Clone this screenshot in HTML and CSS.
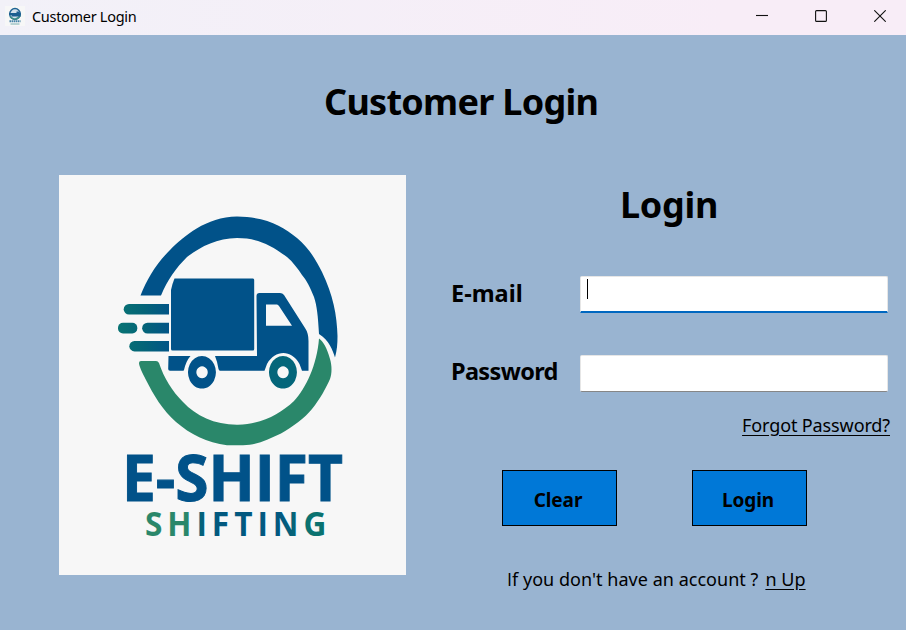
FILE: index.html
```html
<!DOCTYPE html>
<html lang="en">
<head>
<meta charset="utf-8">
<title>Customer Login</title>
<link rel="stylesheet" href="styles.css">
</head>
<body>
<header class="titlebar">
  <svg class="app-icon" width="20" height="20" viewBox="0 0 20 20">
    <rect width="20" height="20" fill="#f7f7f7"/>
    <ellipse cx="10" cy="8" rx="5.3" ry="5.4" fill="#d5e2ec" stroke="#1f6493" stroke-width="1.5"/>
    <path d="M5 10.500Q10 16.500 15.300 9.500" fill="none" stroke="#3f8f85" stroke-width="1.500"/>
    <path d="M4 7h7.500v-1.500h2l2 2v3H6.500V9H4z" fill="#1c5f90"/>
    <path d="M4.500 15.200h11" stroke="#4483a6" stroke-width="2" stroke-dasharray="1.600 .5"/>
    <path d="M5.500 18h9" stroke="#78aeb0" stroke-width="1"/>
  </svg>
  <span class="window-title">Customer Login</span>
  <div class="window-controls">
    <svg width="12" height="12" viewBox="0 0 12 12"><path d="M0 5.500h12"/></svg>
    <svg width="12" height="12" viewBox="0 0 12 12"><rect x=".6" y=".6" width="10.800" height="10.800" rx="1"/></svg>
    <svg width="12" height="12" viewBox="0 0 12 12"><path d="M.3 .3l11.400 11.400M11.700 .3L.3 11.700"/></svg>
  </div>
</header>
<main class="content">
  <h1 class="page-title"><span>Customer Login</span></h1>
  <div class="columns">
    <svg class="logo" width="347" height="400" viewBox="59 175 347 400">
      <defs>
        <linearGradient id="speed" gradientUnits="userSpaceOnUse" x1="118" y1="0" x2="170" y2="0"><stop offset="0" stop-color="#087373"/><stop offset=".5" stop-color="#046478"/><stop offset="1" stop-color="#025487"/></linearGradient>
        <linearGradient id="letters" x1="0" y1="0" x2="1" y2="0"><stop offset=".26" stop-color="#2a876a"/><stop offset=".28" stop-color="#056579"/><stop offset=".4" stop-color="#02597f"/><stop offset=".75" stop-color="#025880"/><stop offset=".9" stop-color="#0a7270"/></linearGradient>
      </defs>
      <g fill="#015289">
        <path d="M140.500 295.500C147 279 156 264 170 250C184 236 206 217 237 216.500C266 217 283 226 297 238C309 248 316 260 322 272C333 295 337 315 337.500 336C337.500 344 337 350 335 357.500C333 351 329 340 319 334C318 316 317 306 314 297C310 287 307 281 302 275C298 269 293 262 287 257C270 244 256 238 237 238C217 238 200 247 187 257C176 268 168 279 161 295.500Z"/>
        <path d="M174.500 278.500H253Q254.200 278.500 254.200 280V349Q254.200 350.500 253 350.500H172.500Q171 350.500 171 349V290Q171.500 288 172.500 284Z"/>
        <path fill-rule="evenodd" d="M256.500 296Q256.500 293 259.500 293H280Q282.500 293 284 295L305 328Q308.500 333 308.500 341V370.700H302Q301 368 299.500 364C291 349 275 350 267 364L264.500 370.700H220Q219 370.700 218.500 369Q217.500 362 215 356H257ZM266 304.500H277Q278 304.500 279 306L292 325.700H266Z"/>
        <path d="M168.500 356H190.500Q186 361 184 370Q184 370.700 183 370.700H170Q168.200 370.700 168.200 369Z"/>
        <path fill-rule="evenodd" d="M202 356a14 16.300 0 1 1-.1 0ZM202 366.300a5.700 6 0 1 0 .1 0Z"/>
        <path fill="#04667a" fill-rule="evenodd" d="M283 356a14 16.300 0 1 1-.1 0ZM283 366.300a5.700 6 0 1 0 .1 0Z"/>
      </g>
      <path fill="#2a876a" d="M139 363Q139 361 141 361H156Q158 361 159 363C164 378 172 391 183 402C196 416 215 425 238 424.700C262 424 280 414 294 401C306 388 317 365 319 338.500C323 341 327 348 330 359C332 366 332 373 330 379C326 388 320 399 312 409C305 418 292 427 281 433.500C267 440 257 445 243 445.200H227C207 443 190 434 176 422C163 411 153 394 146 380C142 372 139 366 139 363Z"/>
      <g fill="url(#speed)">
        <path d="M169 304H129a5.300 5.300 0 0 0 0 10.600h40Z"/>
        <rect x="118" y="322.800" width="19.300" height="10.700" rx="5"/>
        <path d="M169 322.800H147.500a5.300 5.300 0 0 0 0 10.700H169Z"/>
        <path d="M169 341H134.500a5.200 5.200 0 0 0 0 10.400H169Z"/>
      </g>
      <text class="brand" x="122" y="500.800" textLength="221" lengthAdjust="spacingAndGlyphs">E-SHIFT</text>
      <text class="tagline" transform="translate(145 536) scale(.93 1)" textLength="195" lengthAdjust="spacing">SHIFTING</text>
    </svg>
    <form class="login">
      <h2 class="login-title"><span>Login</span></h2>
      <label class="row"><span class="label email-label">E-mail</span><span class="field focused"><i class="caret"></i></span></label>
      <label class="row"><span class="label password-label">Password</span><span class="field"></span></label>
      <a class="forgot"><span>Forgot Password?</span></a>
      <div class="buttons">
        <button type="button"><span class="clear">Clear</span></button>
        <button type="button"><span class="submit">Login</span></button>
      </div>
      <p class="signup"><span><span class="plain">I</span>f you don't have an account ?</span><a>n Up</a></p>
    </form>
  </div>
</main>
</body>
</html>
```
FILE: styles.css
```css
* { box-sizing: border-box; }
body {
  margin: 0;
  width: 906px;
  height: 630px;
  overflow: hidden;
  background: #99b4d1;
  color: #000;
  font-family: "Noto Sans", "Open Sans", sans-serif;
}
.titlebar {
  height: 35px;
  display: flex;
  align-items: center;
  padding: 0 20px 3px 5px;
  background: linear-gradient(90deg, #f2f1f8, #f8edf7 80%);
}
.window-title { margin-left: 7px; font-size: 14.5px; letter-spacing: -.3px; line-height: 20px; }
.window-controls { margin-left: auto; display: flex; gap: 47px; }
.window-controls svg { fill: none; stroke: #111; stroke-width: 1.1; }
.page-title {
  margin: 0;
  padding: 42px 0 0 324px;
  height: 140px;
  font-size: 36px;
  line-height: 50px;
  letter-spacing: -.72px;
  white-space: nowrap;
}
.columns { display: flex; padding-left: 59px; gap: 45px; }
.logo { display: block; background: #f7f7f7; flex: none; }
.brand { font: bold 64px "Open Sans", sans-serif; fill: #015289; stroke: #015289; stroke-width: 1; }
.tagline { font: bold 34px "Open Sans", sans-serif; fill: url(#letters); }
.login { width: 440px; display: flex; flex-direction: column; }
.login-title {
  margin: 0 0 46px;
  padding: 5px 0 0 169px;
  height: 55px;
  font-size: 36px;
  line-height: 50px;
  letter-spacing: -.3px;
}
.row { display: flex; height: 37px; margin-bottom: 42px; }
.label { width: 129px; font-size: 23.5px; font-weight: bold; line-height: 35px; letter-spacing: 0; white-space: nowrap; }
.password-label { line-height: 33px; letter-spacing: -.65px; }
.field {
  width: 308px;
  height: 37px;
  background: #fff;
  border: 1px solid #e6e6e6;
  border-bottom-color: #868686;
  border-radius: 2px;
}
.focused { border-bottom: 2px solid #0067c0; border-radius: 2px 2px 0 0; }
.caret { display: block; width: 1px; height: 20px; margin: 2px 0 0 6px; background: #000; }
.forgot {
  align-self: flex-end;
  margin: -22px 1px 0 0;
  font-size: 18px;
  line-height: 26px;
  letter-spacing: -.12px;
  text-decoration: underline;
  text-underline-offset: 3px;
}
.buttons { display: flex; gap: 75px; margin: 32px 0 0 51px; }
button {
  width: 115px;
  height: 56px;
  padding: 4px 3px 0 0;
  border: 1px solid #000;
  background: #0078d7;
  color: #000;
  font: bold 19px "Noto Sans", sans-serif;
  letter-spacing: -.1px;
}
.signup { margin: 40px 0 0 56px; display: flex; font-size: 18px; line-height: 26px; letter-spacing: .03px; white-space: nowrap; }
.signup a { margin-left: 7px; text-decoration: underline; text-underline-offset: 3px; }
.plain { font-family: "Open Sans", sans-serif; }
```
